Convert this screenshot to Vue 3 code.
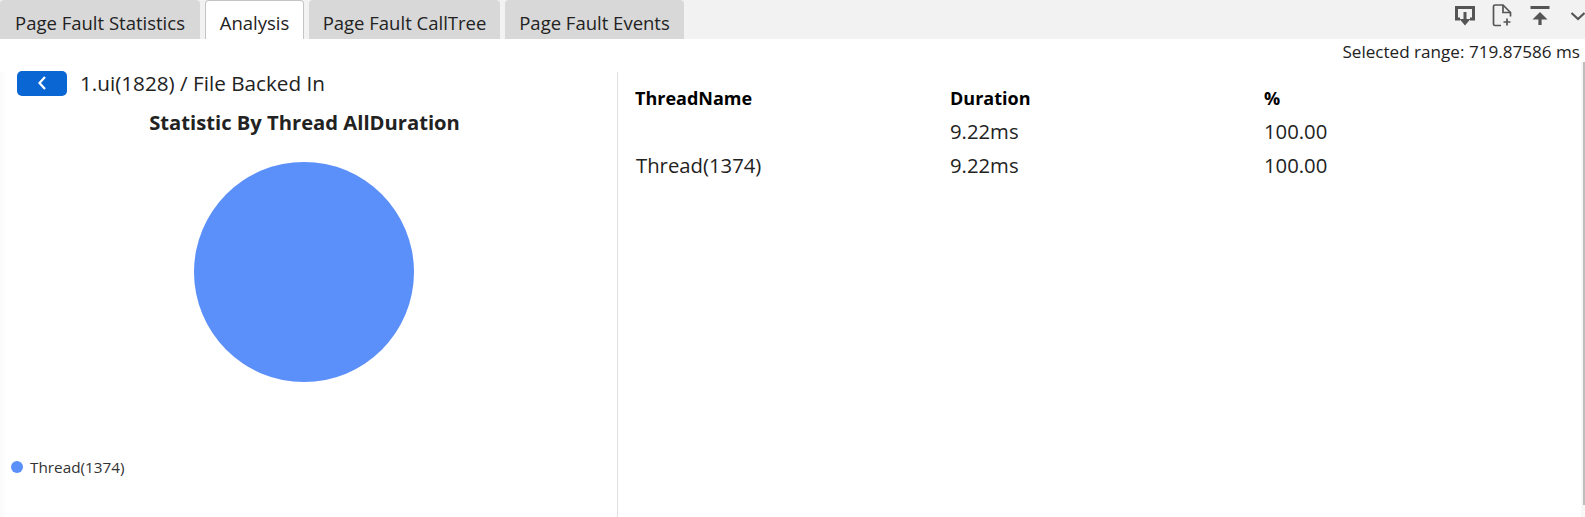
<script setup>
const tabs = [
  { label: 'Page Fault Statistics', width: 200 },
  { label: 'Analysis', width: 99, active: true },
  { label: 'Page Fault CallTree', width: 191 },
  { label: 'Page Fault Events', width: 179 }
]
const rows = [
  { name: '', duration: '9.22ms', pct: '100.00' },
  { name: 'Thread(1374)', duration: '9.22ms', pct: '100.00' }
]
</script>

<template>
  <div class="page">
    <header class="bar">
      <nav class="tabs">
        <div
          v-for="t in tabs"
          :key="t.label"
          class="tab"
          :class="{ active: t.active }"
          :style="{ width: t.width + 'px' }"
        >{{ t.label }}</div>
      </nav>
      <div class="icons">
        <svg width="24" height="24" viewBox="0 0 24 24" fill="none" stroke="#555" stroke-width="3">
          <path d="M7 15H3.5V3.5H20.5V15H17" />
          <path d="M12 8V18" />
          <path d="M6.5 15L12 21.5L17.5 15Z" fill="#555" stroke="none" />
        </svg>
        <svg width="24" height="24" viewBox="0 0 24 24" fill="none" stroke="#555" stroke-width="1.7">
          <path d="M11 21.5H5C4.2 21.5 3.5 20.8 3.5 20V2.5C3.5 1.7 4.2 1 5 1H13L20.5 8.5V12.5" />
          <path d="M13 1V8.5H20.5" />
          <path d="M17 14.5V21.5M13.5 18H20.5" />
        </svg>
        <svg width="24" height="24" viewBox="0 0 24 24" fill="none" stroke="#555">
          <path d="M2.5 3.5H21.5" stroke-width="3" />
          <path d="M12 10V21" stroke-width="3.2" />
          <path d="M4.5 15.5L12 8L19.5 15.5Z" fill="#555" stroke="none" />
        </svg>
        <svg class="chev" width="20" height="24" viewBox="0 0 20 24" fill="none" stroke="#555" stroke-width="2.2">
          <path d="M3.5 9L10 15L16.5 9" />
        </svg>
      </div>
    </header>
    <div class="range">Selected range: 719.87586 ms</div>
    <main class="content">
      <section class="left">
        <div class="crumb">
          <button class="back" type="button">
            <svg width="12" height="16" viewBox="0 0 12 16" fill="none" stroke="#fff" stroke-width="2.2">
              <path d="M9 2L3.5 8L9 14" />
            </svg>
          </button>
          <span>1.ui(1828) / File Backed In</span>
        </div>
        <h2 class="title">Statistic By Thread AllDuration</h2>
        <svg class="pie" width="220" height="220" viewBox="0 0 220 220">
          <circle cx="110" cy="110" r="110" fill="#5b8ff9" />
        </svg>
        <div class="legend"><i class="dot"></i>Thread(1374)</div>
      </section>
      <section class="right">
        <div class="row head">
          <div class="cell">ThreadName</div>
          <div class="cell">Duration</div>
          <div class="cell">%</div>
        </div>
        <div v-for="(r, i) in rows" :key="i" class="row">
          <div class="cell name">{{ r.name }}</div>
          <div class="cell">{{ r.duration }}</div>
          <div class="cell">{{ r.pct }}</div>
        </div>
      </section>
    </main>
    <div class="scrollbar"><div class="thumb"></div></div>
  </div>
</template>

<style>
html, body { margin: 0; background: #fff; overflow: hidden; }
</style>

<style scoped>
.page {
  position: relative;
  width: 1585px;
  height: 517px;
  overflow: hidden;
  font-family: "Open Sans", "Noto Sans", sans-serif;
  color: #222;
  background: #fff;
}
.bar {
  height: 39px;
  background: #f2f2f2;
  display: flex;
  justify-content: space-between;
}
.tabs { display: flex; gap: 5px; }
.tab {
  box-sizing: border-box;
  background: #d8d8d8;
  text-align: center;
  font-size: 18.5px;
  line-height: 46px;
  border-radius: 4px 4px 0 0;
  white-space: nowrap;
}
.tab.active {
  background: #fff;
  border: 1px solid #c4c4c4;
  border-bottom: 0;
  line-height: 44px;
}
.icons {
  display: flex;
  gap: 13.5px;
  padding: 4px 0 0;
  height: 24px;
  margin-right: -2.5px;
}
.chev { margin-left: 2.5px; }
.range {
  height: 25px;
  text-align: right;
  padding-right: 5px;
  font-size: 17.1px;
  line-height: 25px;
}
.content {
  display: flex;
  margin-top: 8px;
}
.left {
  box-sizing: border-box;
  width: 618px;
  height: 445px;
  border-right: 1px solid #e0e0e0;
  padding: 0 0 0 11px;
  background: linear-gradient(to right, #fafafa, #fff 7px);
}
.crumb {
  display: flex;
  align-items: center;
  gap: 13px;
  margin-top: -1px;
  padding-left: 6px;
  font-size: 20.7px;
  height: 24px;
}
.back {
  width: 50px;
  height: 25px;
  flex: none;
  padding: 0;
  border: 0;
  border-radius: 5px;
  background: #0a66d3;
  display: flex;
  align-items: center;
  justify-content: center;
}
.title {
  margin: 12px 0 0;
  width: 587px;
  text-align: center;
  font-size: 20.2px;
  line-height: 30px;
  font-weight: 700;
}
.pie {
  display: block;
  margin: 25px 0 0 183px;
}
.legend {
  display: flex;
  align-items: center;
  gap: 7px;
  margin-top: 75px;
  font-size: 15.3px;
  line-height: 20px;
  color: #333;
}
.dot {
  width: 12px;
  height: 12px;
  border-radius: 50%;
  background: #5b8ff9;
}
.right {
  flex: 1;
  padding: 10px 0 0 17px;
}
.row {
  display: grid;
  grid-template-columns: 315px 314px 1fr;
  font-size: 20.3px;
  line-height: 34px;
  color: #222;
}
.row.head {
  font-size: 18px;
  line-height: 32px;
  font-weight: 700;
  color: #000;
}
.cell.name { padding-left: 1px; }
.scrollbar {
  position: absolute;
  top: 62px;
  right: 0;
  bottom: 0;
  width: 4px;
  background: #f7f7f7;
}
.thumb {
  margin-left: 2px;
  height: 443px;
  background: #bdbdbd;
}
</style>
